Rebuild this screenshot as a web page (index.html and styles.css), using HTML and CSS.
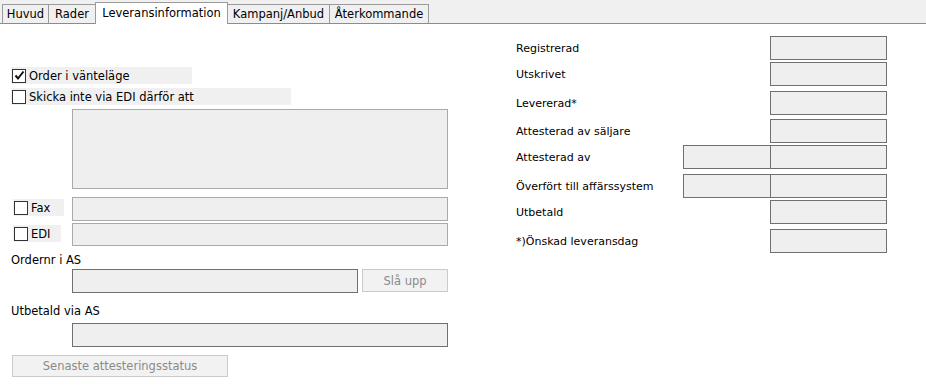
FILE: index.html
```html
<!DOCTYPE html>
<html>
	<head>
		<meta charset="utf-8">
		<title>Leveransinformation</title>
		<link rel="stylesheet" href="styles.css">
	</head>

	<body>
		<div class="tabbar">
			<div class="tab tab-huvud">Huvud</div>
			<div class="tab tab-rader">Rader</div>
			<div class="tab tab-active">Leveransinformation</div>
			<div class="tab tab-kampanj">Kampanj/Anbud</div>
			<div class="tab tab-ater">Återkommande</div>
		</div>

		<div class="page">
			<div class="left">
				<div class="chk-row row-order">
					<span class="chk">
						<svg width="11" height="11" viewBox="0 0 11 11"><polyline points="1.5,5.5 4,8.5 9.5,1.5" fill="none" stroke="#111" stroke-width="2"/></svg>
					</span>
					Order i vänteläge
				</div>
				<div class="chk-row row-skip">
					<span class="chk"></span>
					Skicka inte via EDI därför att
				</div>
				<div class="field field-light field-area"></div>

				<div class="line line-fax">
					<div class="chk-row row-small row-fax"><span class="chk"></span>Fax</div>
					<div class="field field-light field-wide"></div>
				</div>
				<div class="line line-edi">
					<div class="chk-row row-small row-edi"><span class="chk"></span>EDI</div>
					<div class="field field-light field-wide"></div>
				</div>

				<div class="caption cap-order">Ordernr i AS</div>
				<div class="line line-order">
					<div class="field field-order"></div>
					<button type="button" class="btn btn-lookup">Slå upp</button>
				</div>

				<div class="caption cap-paid">Utbetald via AS</div>
				<div class="field field-wide field-paid"></div>

				<button type="button" class="btn btn-status">Senaste attesteringsstatus</button>
			</div>

			<div class="right">
				<div class="rrow">
					<span class="rlabel">Registrerad</span>
					<div class="box"></div>
				</div>
				<div class="rrow gap-s">
					<span class="rlabel">Utskrivet</span>
					<div class="box"></div>
				</div>
				<div class="rrow gap-l">
					<span class="rlabel">Levererad*</span>
					<div class="box"></div>
				</div>
				<div class="rrow gap-m">
					<span class="rlabel">Attesterad av säljare</span>
					<div class="box"></div>
				</div>
				<div class="rrow gap-s">
					<span class="rlabel">Attesterad av</span>
					<div class="box box-extra"></div>
					<div class="box"></div>
				</div>
				<div class="rrow gap-l">
					<span class="rlabel">Överfört till affärssystem</span>
					<div class="box box-extra"></div>
					<div class="box"></div>
				</div>
				<div class="rrow gap-s">
					<span class="rlabel">Utbetald</span>
					<div class="box"></div>
				</div>
				<div class="rrow gap-l">
					<span class="rlabel">*)Önskad leveransdag</span>
					<div class="box"></div>
				</div>
			</div>
		</div>
	</body>
</html>
```

FILE: styles.css
```css
body {
	margin: 0;
	background-color: #ffffff;
	color: #000000;
	font-family: "DejaVu Sans", Verdana, sans-serif;
	font-size: 11px;
}

/* tabs */
.tabbar {
	display: flex;
	align-items: flex-end;
	height: 23px;
	padding-left: 2px;
	background-color: #f0f0f0;
	border-bottom: 1px solid #8c8c8c;
}

.tab {
	box-sizing: border-box;
	height: 19px;
	padding-top: 1px;
	line-height: 17px;
	text-align: center;
	border: 1px solid #9a9a9a;
	border-bottom: none;
	background-color: #f0f0f0;
	font-size: 11.5px;
}

.tab + .tab {
	margin-left: -1px;
}

.tab-huvud { width: 47px; }
.tab-rader { width: 48px; }
.tab-kampanj { width: 103px; }
.tab-ater { width: 100px; }

.tab-active {
	position: relative;
	width: 133px;
	height: 22px;
	margin-bottom: -1px;
	padding-top: 0;
	line-height: 20px;
	background-color: #ffffff;
}

/* layout */
.page {
	display: flex;
	padding-top: 12px;
}

.left {
	display: flex;
	flex-direction: column;
	align-items: flex-start;
	width: 437px;
	margin-left: 11px;
	padding-top: 31px;
	font-size: 11.5px;
}

.right {
	display: flex;
	flex-direction: column;
	margin-left: 68px;
}

/* checkboxes */
.chk-row {
	display: flex;
	align-items: center;
	gap: 3px;
	box-sizing: border-box;
	height: 17px;
	padding-left: 1px;
	background-color: #f0f0f0;
}

.row-order { width: 181px; }

.row-skip {
	width: 280px;
	margin-top: 4px;
}

.chk {
	display: flex;
	align-items: center;
	justify-content: center;
	box-sizing: border-box;
	width: 14px;
	height: 14px;
	border: 1px solid #333333;
	background-color: #ffffff;
}

.row-small {
	height: 17px;
	margin-left: 2px;
	margin-top: 2px;
	padding-left: 1px;
}

.row-fax { width: 51px; }
.row-edi { width: 48px; }

/* fields */
.field {
	box-sizing: border-box;
	height: 24px;
	border: 1px solid #707070;
	background-color: #efefef;
}

.field-light {
	border-color: #aaaaaa;
}

.field-area {
	width: 376px;
	height: 80px;
	margin-top: 4px;
	margin-left: 61px;
}

.field-wide {
	width: 376px;
}

.line {
	display: flex;
	align-items: flex-start;
	width: 437px;
}

.line .field-wide {
	margin-left: auto;
}

.line-fax {
	margin-top: 8px;
}

.line-edi {
	margin-top: 2px;
}

.line-edi .field {
	height: 23px;
}

.caption {
	line-height: 13px;
}

.cap-order {
	margin-top: 8px;
	margin-bottom: 2px;
}

.line-order {
	gap: 4px;
	padding-left: 61px;
	box-sizing: border-box;
}

.field-order {
	width: 287px;
}

.cap-paid {
	margin-top: 12px;
	margin-bottom: 5px;
}

.field-paid {
	margin-left: 61px;
}

.btn {
	box-sizing: border-box;
	height: 23px;
	border: 1px solid #cacaca;
	border-radius: 0;
	background-color: #f2f2f2;
	color: #8a8a8a;
	font-family: "DejaVu Sans", Verdana, sans-serif;
	font-size: 11.5px;
	padding: 0;
}

.btn-lookup {
	width: 86px;
}

.btn-status {
	width: 216px;
	height: 22px;
	margin-top: 8px;
	margin-left: 1px;
}

/* right column */
.rrow {
	display: flex;
	align-items: center;
	height: 24px;
}

.gap-s { margin-top: 2px; }
.gap-m { margin-top: 4px; }
.gap-l { margin-top: 5px; }

.box {
	box-sizing: border-box;
	width: 117px;
	height: 24px;
	border: 1px solid #707070;
	background-color: #efefef;
}

.box-extra {
	width: 87px;
	border-right: none;
}

.rlabel {
	flex: 1;
	width: 167px;
}
```
